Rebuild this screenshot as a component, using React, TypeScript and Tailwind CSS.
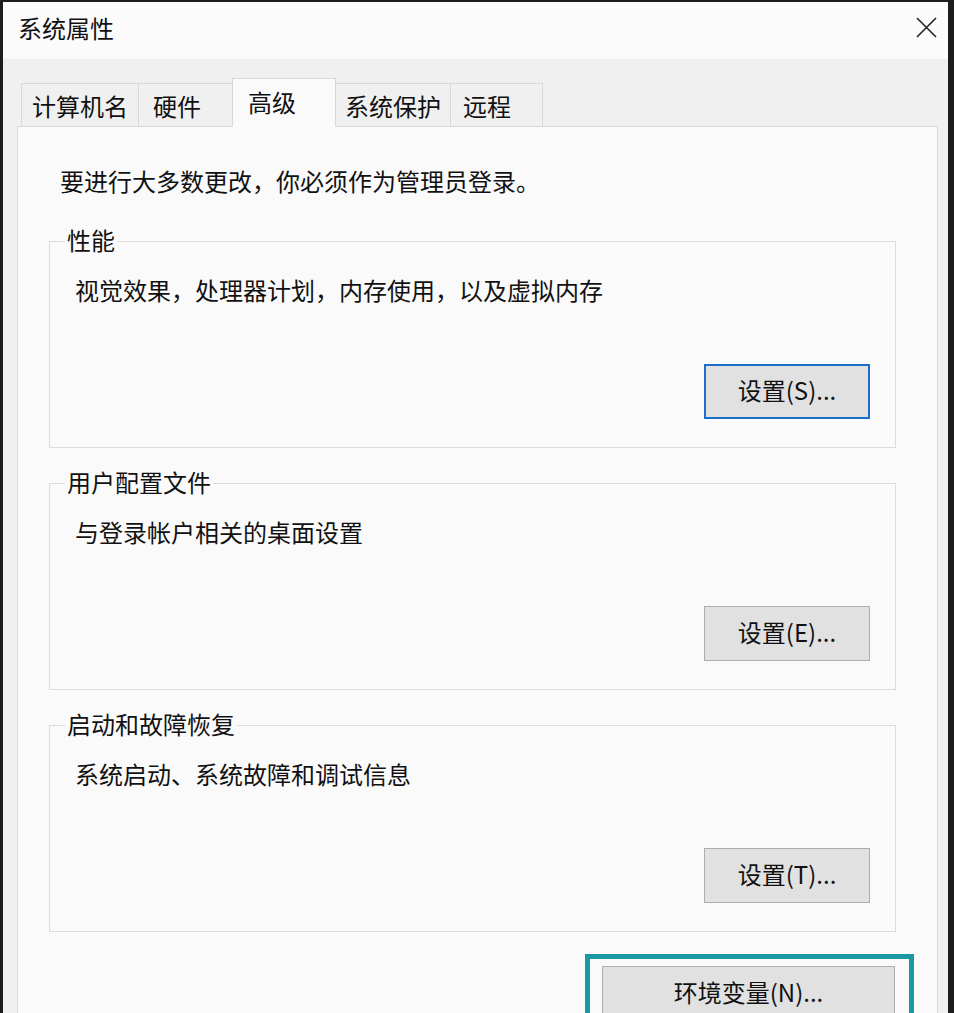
import React from "react";

function Btn({ label, focused }: { label: string; focused?: boolean }) {
  return (
    <button
      className={
        focused
          ? "w-[166px] h-[55px] pb-[4px] bg-[#e1e1e1] border-2 border-[#1b6fcb] text-[24px] leading-[24px] text-[#111]"
          : "w-[166px] h-[55px] pb-[4px] bg-[#e1e1e1] border border-[#adadad] text-[24px] leading-[24px] text-[#111]"
      }
    >
      {label}
    </button>
  );
}

function Group({
  title,
  desc,
  button,
  focused,
}: {
  title: string;
  desc: string;
  button: string;
  focused?: boolean;
}) {
  return (
    <div className="relative ml-[31px] mr-[41px] h-[207px] border border-[#dcdcdc] flex flex-col pt-[36px] pb-[28px]">
      <span className="absolute -top-[14px] left-[15px] px-[2px] bg-[#fafafb] text-[24px] leading-[24px] text-[#111]">
        {title}
      </span>
      <div className="pl-[25px] text-[24px] leading-[24px] text-[#111]">{desc}</div>
      <div className="flex-1" />
      <div className="flex justify-end pr-[25px]">
        <Btn label={button} focused={focused} />
      </div>
    </div>
  );
}

export default function App() {
  const tabs = [
    { t: "计算机名", w: "w-[117px]", pl: "pl-[10px]", sel: false, bl: true },
    { t: "硬件", w: "w-[94px]", pl: "pl-[14px]", sel: false, bl: true },
    { t: "高级", w: "w-[104px]", pl: "pl-[15px]", sel: true, bl: true },
    { t: "系统保护", w: "w-[114px]", pl: "pl-[9px]", sel: false, bl: false },
    { t: "远程", w: "w-[93px]", pl: "pl-[12px]", sel: false, bl: true, br: true },
  ];
  return (
    <div className="w-[954px] h-[1013px] overflow-hidden bg-[#1d1d1d] pl-[3px] pt-[2px] font-['Noto_Sans_CJK_SC','Microsoft_YaHei',sans-serif]">
      <div className="w-[945px] h-[1011px] bg-[#f0f0f0] flex flex-col">
        {/* title bar */}
        <div className="h-[57px] bg-[#fbfbfc] flex items-center justify-between pl-[15px] pr-[11px] pb-[6px] shrink-0">
          <span className="text-[24px] leading-[24px] text-[#111]">系统属性</span>
          <svg width="21" height="21" viewBox="0 0 21 21">
            <path d="M1 1 L20 20 M20 1 L1 20" stroke="#222" strokeWidth="1.6" fill="none" />
          </svg>
        </div>
        {/* tabs */}
        <div className="pl-[18px] pt-[19px] flex items-end h-[67px] shrink-0">
          {tabs.map((tab) =>
            tab.sel ? (
              <div
                key={tab.t}
                className={`${tab.w} h-[49px] -mb-px relative z-10 bg-[#fafafb] border-l border-t border-r border-[#d9d9d9] ${tab.pl} pt-[11px] text-[24px] leading-[24px] text-[#111]`}
              >
                {tab.t}
              </div>
            ) : (
              <div
                key={tab.t}
                className={`${tab.w} h-[43px] bg-[#f0f0f0] border-t border-[#d9d9d9] ${tab.bl ? "border-l" : ""} ${
                  tab.br ? "border-r" : ""
                } ${tab.pl} pt-[10px] text-[24px] leading-[24px] text-[#111]`}
              >
                {tab.t}
              </div>
            )
          )}
        </div>
        {/* panel */}
        <div className="ml-[14px] w-[921px] flex-1 bg-[#fafafb] border border-[#d9d9d9] flex flex-col">
          <div className="mt-[42px] pl-[42px] text-[24px] leading-[24px] text-[#111]">
            要进行大多数更改，你必须作为管理员登录。
          </div>
          <div className="mt-[48px] flex flex-col gap-[35px]">
            <Group title="性能" desc="视觉效果，处理器计划，内存使用，以及虚拟内存" button="设置(S)..." focused />
            <Group title="用户配置文件" desc="与登录帐户相关的桌面设置" button="设置(E)..." />
            <Group title="启动和故障恢复" desc="系统启动、系统故障和调试信息" button="设置(T)..." />
          </div>
          <div className="mt-[22px] flex justify-end pr-[23px]">
            <div className="w-[329px] border-[5px] border-[#1a98a3] pt-[7px] pl-[12px] pb-[10px]">
              <button className="w-[293px] h-[55px] pb-[4px] bg-[#e1e1e1] border border-[#adadad] text-[24px] leading-[24px] text-[#111]">
                环境变量(N)...
              </button>
            </div>
          </div>
        </div>
      </div>
    </div>
  );
}
